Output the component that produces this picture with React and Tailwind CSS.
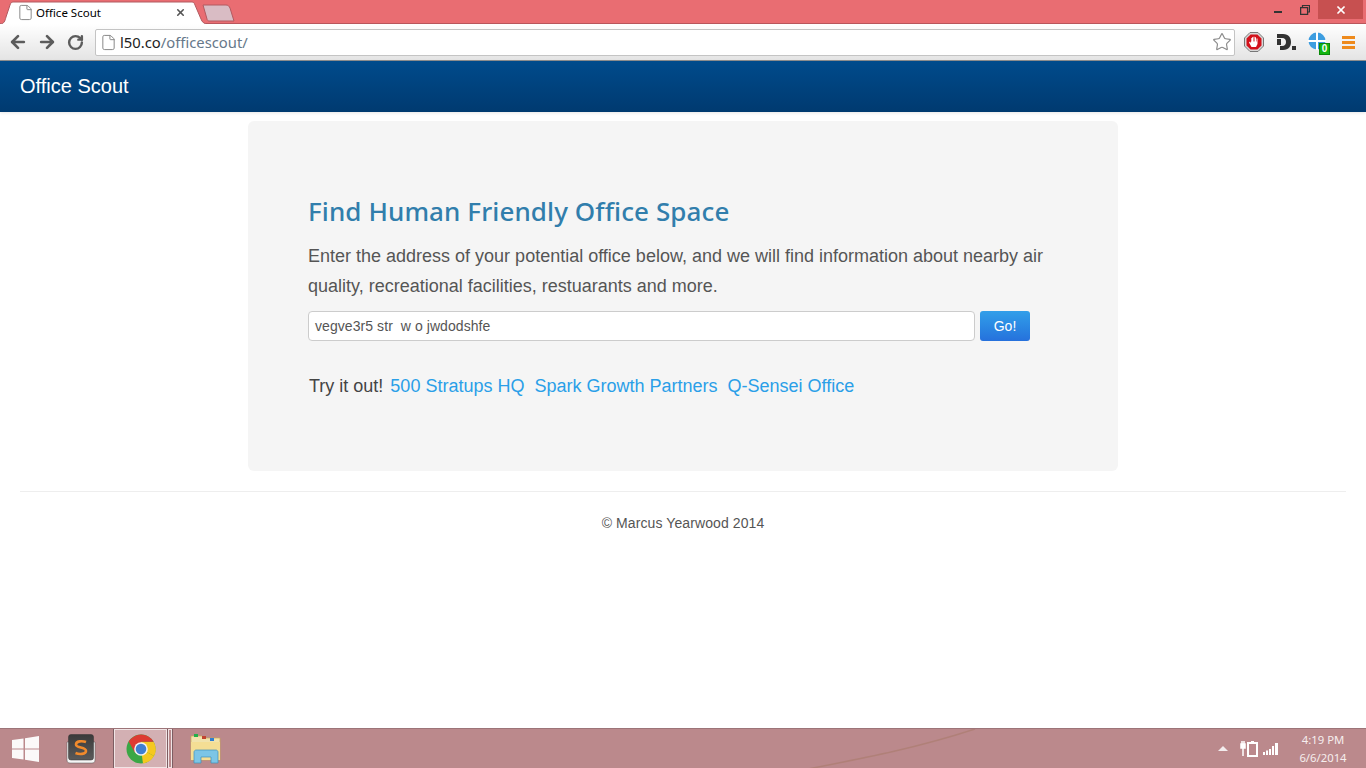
import { ArrowLeft, ArrowRight, RotateCw, Star, File, X } from 'lucide-react';

const SANS = "font-['Liberation_Sans',Arial,sans-serif]";

const TabStrip = () => (
  <div className="h-6 bg-[#e96d72] border-b border-[#b9565c] flex items-end relative shrink-0">
    <div className="relative w-[196px] h-[23px] -mb-px flex items-center pl-[14px] pr-[10px] ml-[3px]">
      <svg className="absolute left-[-3px] top-0" width="208" height="23" viewBox="0 0 208 23">
        <path d="M0 23 C4 23 5 20 6 16 L10 4 C11 1 12 1 15 1 L190 1 C193 1 194 1 195 4 L201 18 C202 21 204 23 208 23 Z" fill="#fff" />
        <path d="M0 23 C4 23 5 20 6 16 L10 4 C11 1 12 1 15 1 L190 1 C193 1 194 1 195 4 L201 18 C202 21 204 23 208 23" fill="none" stroke="#b25a60" strokeWidth="1" />
      </svg>
      <File className="relative text-[#8a8a8a] w-[17px] h-[17px]" strokeWidth={1.4} />
      <span className="relative ml-[2px] flex-1 text-[11.5px] text-black font-['Noto_Sans','Open_Sans',sans-serif]">Office Scout</span>
      <X className="relative text-[#555] w-[11px] h-[11px] mr-[3px]" strokeWidth={3.5} />
    </div>
    <svg className="ml-[3px] mb-[1px]" width="33" height="18" viewBox="0 0 33 18">
      <path d="M1 1 L24 1 C26 1 27 2 28 4 L32 17 L7 17 C6 17 5 16 5 15 Z" fill="#d9bcc4" stroke="#b25a60" strokeWidth="1" />
    </svg>
    <div className="flex-1" />
    <div className="self-start flex items-start h-[19px] mr-[3px]">
      <div className="w-[26px] flex justify-center pt-[11px]"><div className="w-2 h-[2px] bg-[#333]" /></div>
      <div className="w-[27px] flex justify-center pt-[5px]">
        <svg width="10" height="10" viewBox="0 0 10 10" fill="none" stroke="#333" strokeWidth="1.2">
          <rect x="0.6" y="2.6" width="7" height="6.8" strokeWidth="1.3" />
          <path d="M2.5 2.5 V0.5 H9.5 V7 H7.5" />
        </svg>
      </div>
      <div className="w-[45px] h-[19px] bg-[#c75050] flex items-center justify-center">
        <X className="text-white w-[12px] h-[12px]" strokeWidth={3.5} />
      </div>
    </div>
  </div>
);

const StopIcon = () => (
  <svg width="20" height="20" viewBox="0 0 20 20">
    <path d="M6 0.5 H14 L19.5 6 V14 L14 19.5 H6 L0.5 14 V6 Z" fill="#d8d8d8" stroke="#777" />
    <path d="M6.6 2.5 H13.4 L17.5 6.6 V13.4 L13.4 17.5 H6.6 L2.5 13.4 V6.6 Z" fill="#d3111b" />
    <path d="M7 6 V11 L6 9.5 L5 10.5 L7.5 15 H12 L13.5 12 V6.5 H12.5 V9.5 H12 V5.2 H11 V9.5 H10.5 V4.7 H9.5 V9.5 H9 V5.2 H8 V9.5 H7.7 V6 Z" fill="#fff" />
  </svg>
);

const Toolbar = () => (
  <div className="h-[36px] shrink-0 bg-gradient-to-b from-white to-[#e4e4e4] flex items-center border-b border-[#8f8f8f] box-content">
    <div className="flex items-center pl-[8px] gap-[9px] text-[#5c5c5c] w-[95px]">
      <ArrowLeft className="w-[20px] h-[20px]" strokeWidth={3.2} />
      <ArrowRight className="w-[20px] h-[20px]" strokeWidth={3.2} />
      <RotateCw className="w-[17px] h-[17px] ml-[1px]" strokeWidth={3.4} />
    </div>
    <div className="w-[1140px] h-[27px] bg-white border border-[#c4c4c4] rounded-[2px] flex items-center pl-[4px] pr-[2px]">
      <File className="text-[#888] w-[17px] h-[17px]" strokeWidth={1.4} />
      <span className="ml-[3px] flex-1 text-[14.8px] text-[#222] font-['Noto_Sans','Open_Sans',sans-serif]">
        l50.co<span className="text-[#66788a]">/officescout/</span>
      </span>
      <Star className="text-[#8a8a8a] w-[20px] h-[20px]" strokeWidth={1.4} />
    </div>
    <div className="flex items-center ml-[9px]">
      <StopIcon />
      <svg className="ml-[12px]" width="20" height="18" viewBox="0 0 20 18">
        <path d="M1 1 H7 C13 1 15 5 15 9 C15 13 13 17 7 17 H4 V13 H6 C9 13 10 11 10 9 C10 7 9 5 6 5 H1 Z" fill="#333" />
        <rect x="16" y="13" width="4" height="4" fill="#333" />
        <rect x="1" y="6" width="4" height="6" fill="#333" />
      </svg>
      <div className="relative ml-[12px] w-[20px] h-[20px]">
        <svg width="18" height="18" viewBox="0 0 18 18">
          <circle cx="9" cy="9" r="8.5" fill="#3d9de0" />
          <path d="M9 0 V18 M0 9 H18" stroke="#fff" strokeWidth="2" />
        </svg>
        <div className="absolute left-[11px] top-[11px] w-[11px] h-[12px] bg-[#12b512] border border-[#0a8a0a] text-white text-[10px] leading-[10px] text-center font-bold font-['Liberation_Sans',sans-serif]">0</div>
      </div>
      <div className="ml-[14px] flex flex-col gap-[2px]">
        <div className="w-[13px] h-[3px] bg-[#ee8a1c]" />
        <div className="w-[13px] h-[3px] bg-[#ee8a1c]" />
        <div className="w-[13px] h-[3px] bg-[#ee8a1c]" />
      </div>
    </div>
  </div>
);

const WindowsLogo = () => (
  <svg width="27" height="26" viewBox="0 0 27 26" fill="#fff" opacity="0.95">
    <path d="M0 4 L11.5 2.4 V12.4 H0 Z M13 2.2 L27 0 V12.4 H13 Z M0 13.6 H11.5 V23.6 L0 22 Z M13 13.6 H27 V26 L13 23.8 Z" />
  </svg>
);

const SublimeIcon = () => (
  <svg width="30" height="30" viewBox="0 0 30 30">
    <defs>
      <linearGradient id="subl" x1="0" y1="0" x2="0" y2="1">
        <stop offset="0" stopColor="#3a3a3a" />
        <stop offset="1" stopColor="#5a5a5a" />
      </linearGradient>
    </defs>
    <path d="M1 8 H29 V26 C29 28 28 29 26 29 H4 C2 29 1 28 1 26 Z" fill="#f6f6f6" stroke="#555" strokeWidth="0.5" />
    <rect x="2.5" y="0.5" width="25" height="25.5" rx="2.5" fill="url(#subl)" stroke="#333" strokeWidth="0.5" />
    <path d="M20 8 C16 6.5 10 7 10 10.5 C10 14.5 20 12.5 20 17 C20 20.5 13 20.5 9.5 19" fill="none" stroke="#f08a2c" strokeWidth="2.6" />
  </svg>
);

const ChromeIcon = () => (
  <svg width="30" height="30" viewBox="0 0 30 30">
    <circle cx="15" cy="15" r="14.5" fill="#3aa745" />
    <path d="M15 15 L28 22 A14.5 14.5 0 0 0 27.6 7.7 L15 7.7 Z" fill="#f5c81f" />
    <path d="M15 15 L17 29.4 A14.5 14.5 0 0 0 28 22 Z" fill="#f5c81f" />
    <path d="M2.7 7.6 A14.5 14.5 0 0 1 27.6 7.7 L15 7.7 L8.8 18.5 Z" fill="#dd3b32" />
    <circle cx="15" cy="15" r="6.8" fill="#f2f2f2" />
    <circle cx="15" cy="15" r="5.3" fill="#3f7fd1" />
  </svg>
);

const FolderIcon = () => (
  <svg width="32" height="31" viewBox="0 0 32 31">
    <path d="M1 3 H12 L14 5 H30 V27 H1 Z" fill="#f1e3ac" stroke="#c9a954" strokeWidth="0.7" />
    <rect x="4" y="1" width="4" height="3" fill="#21b04a" />
    <rect x="12" y="3" width="4" height="3" fill="#c2452f" />
    <rect x="20" y="5" width="4" height="3" fill="#2f7fd0" />
    <path d="M1 9 H30 V27 H1 Z" fill="#f4de94" />
    <path d="M4 30 V19 C4 18 5 17 6 17 H26 C27 17 28 18 28 19 V30 H21 V24 H11 V30 Z" fill="#7cc5e6" stroke="#3f8fb8" strokeWidth="0.7" />
  </svg>
);

const Taskbar = () => (
  <div className="h-10 shrink-0 bg-[#bb898c] border-t border-[#9c7478] flex items-center relative overflow-hidden">
    <svg className="absolute left-[800px] top-0" width="190" height="40" viewBox="0 0 190 40">
      <path d="M8 40 C70 28 120 18 175 0" fill="none" stroke="#b08078" strokeWidth="1.5" />
    </svg>
    <div className="relative flex items-center h-full">
      <div className="w-[50px] flex justify-center"><WindowsLogo /></div>
      <div className="w-[62px] flex justify-center"><SublimeIcon /></div>
      <div className="ml-[2px] w-[53px] h-[39px] flex justify-center items-center bg-[#d3b0b3] border border-[#f1e4e5] outline outline-[#7d5d62]"><ChromeIcon /></div>
      <div className="ml-[1px] w-[4px] h-[39px] border border-[#f1e4e5] outline outline-[#7d5d62]" />
      <div className="ml-[14px] w-[40px] flex justify-center"><FolderIcon /></div>
    </div>
    <div className="flex-1" />
    <div className="relative flex items-center h-full text-white">
      <div className="w-0 h-0 border-x-[5px] border-x-transparent border-b-[5px] border-b-[#f3eced]" />
      <svg className="ml-[12px]" width="18" height="17" viewBox="0 0 18 17">
        <path d="M1 4 V8 H5 V4 Z M2 1 V4 M4 1 V4 M3 8 V16" fill="#fff" stroke="#fff" strokeWidth="1.5" />
        <rect x="8" y="3" width="9" height="13" fill="none" stroke="#fff" strokeWidth="2" />
        <rect x="11" y="1" width="3" height="2" fill="#fff" />
      </svg>
      <svg className="ml-[5px]" width="17" height="12" viewBox="0 0 17 12" fill="#fff">
        <rect x="0" y="9" width="2" height="3" />
        <rect x="3" y="7.5" width="2" height="4.5" />
        <rect x="6" y="6" width="2" height="6" />
        <rect x="9" y="3" width="2" height="9" />
        <rect x="12" y="0" width="3" height="12" />
      </svg>
      <div className="ml-[10px] w-[66px] mr-[10px] text-center text-[11.3px] leading-[18px] text-[#f6eeee] font-['Noto_Sans','Open_Sans',sans-serif]">
        <div>4:19 PM</div>
        <div>6/6/2014</div>
      </div>
    </div>
  </div>
);

const App = () => {
  const links = ['500 Stratups HQ', 'Spark Growth Partners', 'Q-Sensei Office'];

  return (
    <div className={`h-screen flex flex-col overflow-hidden bg-white ${SANS}`}>
      <TabStrip />
      <Toolbar />

      <div className="h-[51px] shrink-0 bg-gradient-to-b from-[#004b8c] to-[#003a70] flex items-center pl-5 pb-[2px] text-white text-[20px] shadow-[0_1px_3px_rgba(0,0,0,0.1)]">
        Office Scout
      </div>

      <main className="flex-1 min-h-0 px-5 pt-[9px]">
        <div className="w-[870px] h-[350px] mx-auto bg-[#f5f5f5] rounded-md px-[60px] pt-[73px]">
          <h1 className="text-[26px] tracking-[0.1px] leading-[34px] font-medium text-[#317eac] font-['Noto_Sans','Open_Sans',sans-serif]">
            Find Human Friendly Office Space
          </h1>
          <p className="mt-[13px] text-[18px] leading-[30px] text-[#555]">
            Enter the address of your potential office below, and we will find information about nearby air quality, recreational facilities, restuarants and more.
          </p>
          <div className="mt-[10px] flex gap-[5px]">
            <div className="w-[667px] h-[30px] bg-white border border-[#ccc] rounded-[4px] pl-[6px] flex items-center text-[14px] tracking-[0.07px] text-[#555] whitespace-pre">
              vegve3r5 str  w o jwdodshfe
            </div>
            <button className="w-[50px] h-[30px] rounded-[3px] bg-gradient-to-b from-[#329fe9] to-[#2671dc] text-white text-[14px]">
              Go!
            </button>
          </div>
          <div className="mt-[30px] text-[18px] leading-[30px] text-[#444] flex">
            <span className="ml-px">Try it out!</span>
            <div className="ml-[7px] flex gap-[10px]">
              {links.map((l) => (
                <a key={l} className="text-[#2a9fe8]" href="#">{l}</a>
              ))}
            </div>
          </div>
        </div>

        <div className="mt-5 border-t border-[#eeeeee] pt-[21px] text-center text-[14px] tracking-[0.1px] leading-5 text-[#555]">
          © Marcus Yearwood 2014
        </div>
      </main>

      <Taskbar />
    </div>
  );
};

export default App;
